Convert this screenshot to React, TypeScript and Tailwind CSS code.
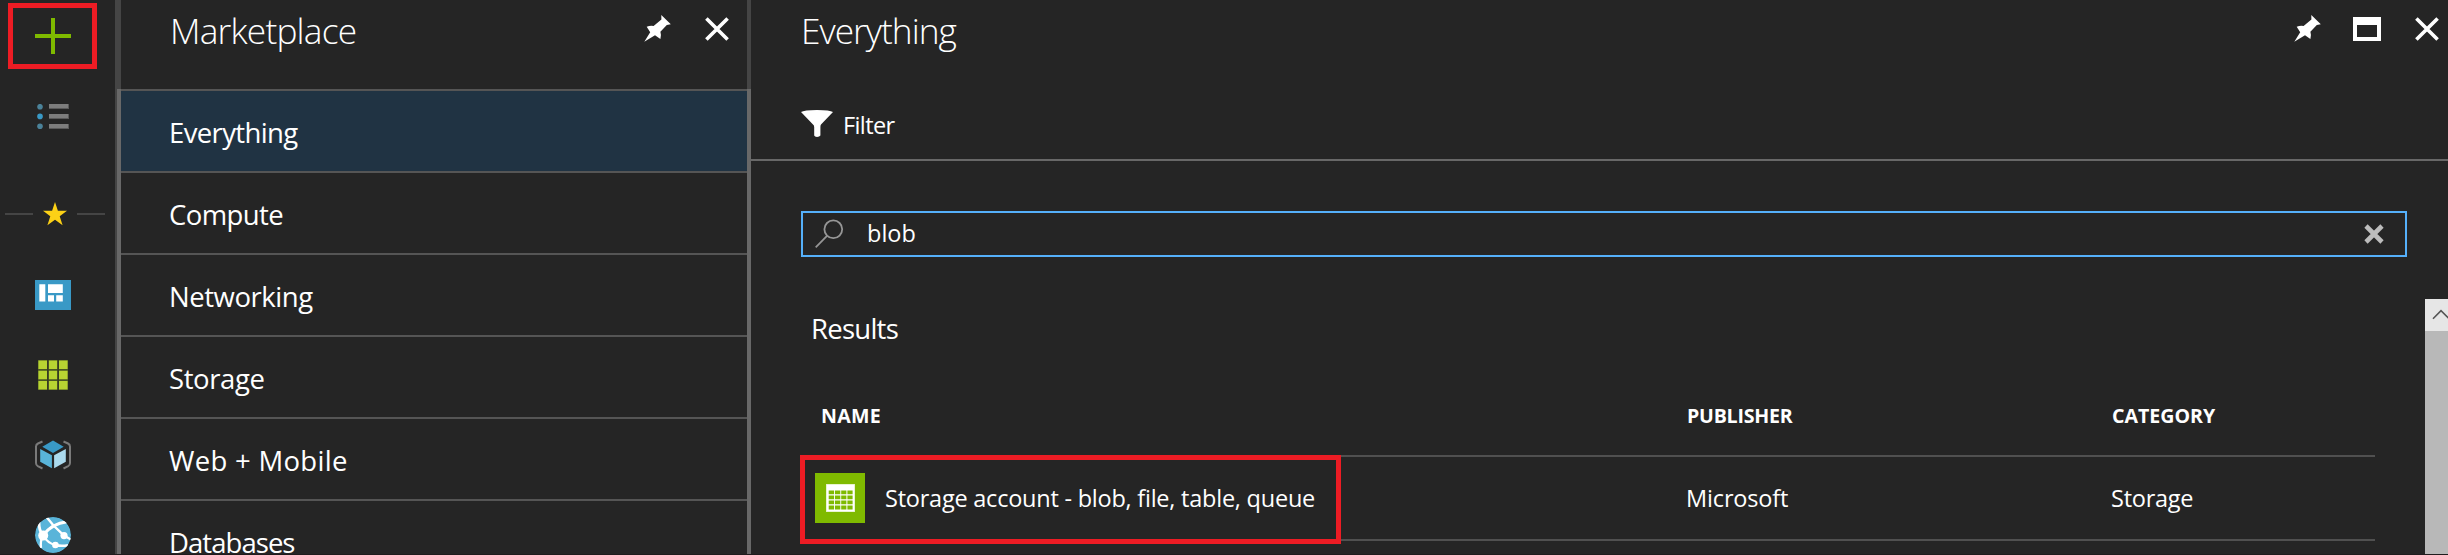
function PinIcon() {
  return (
    <svg width="28" height="28" viewBox="0 0 28 28" className="shrink-0" fill="#fff">
      <path d="M0.3 27.7 L6.2 18.2 L2.7 12.8 Q6 11.4 9.6 12 L17.4 5.4 L17.3 1 L26.8 10.3 L22.8 11 L16.4 17.8 Q17.6 21.4 16.4 25 L11 21.2 Z" />
    </svg>
  );
}

function CloseIcon() {
  return (
    <svg width="24" height="24" viewBox="0 0 24 24" className="shrink-0" stroke="#fff" strokeWidth="3.6">
      <path d="M1.4 1.4 L22.6 22.6 M22.6 1.4 L1.4 22.6" />
    </svg>
  );
}

function MaximizeIcon() {
  return (
    <svg width="28" height="24" viewBox="0 0 28 24" className="shrink-0">
      <path fill="#fff" fillRule="evenodd" d="M0 0H28V24H0ZM4 8V20H24V8Z" />
    </svg>
  );
}

function PlusIcon() {
  return (
    <svg width="36" height="36" viewBox="0 0 36 36" className="mt-[18px] ml-[35px] shrink-0" fill="#7fba00">
      <path d="M16 0H20V16H36V20H20V36H16V20H0V16H16Z" />
    </svg>
  );
}

function ListIcon() {
  return (
    <svg width="34" height="26" viewBox="0 0 34 26" className="mt-[50px] ml-[36px] shrink-0">
      <circle cx="4" cy="2.7" r="2.8" fill="#4b8299" />
      <circle cx="4" cy="12.4" r="2.8" fill="#3999c6" />
      <circle cx="4" cy="22.3" r="2.8" fill="#4b8299" />
      <path fill="#5a5a5a" d="M13 0h20v5h-20z M13 10h20v5h-20z M13 20h20v5h-20z" />
      <path fill="#7d7d7d" d="M13 0h19v4h-19z M13 10h19v4h-19z M13 20h19v4h-19z" />
    </svg>
  );
}

function StarIcon() {
  return (
    <svg width="24" height="24" viewBox="0 0 24 24" className="shrink-0" fill="#fcd116">
      <path d="M12 0 L14.9 8.8 L24 8.8 L16.7 14.2 L19.6 23.2 L12 17.8 L4.4 23.2 L7.3 14.2 L0 8.8 L9.1 8.8 Z" />
    </svg>
  );
}

function DashboardIcon() {
  return (
    <svg width="36" height="30" viewBox="0 0 36 30" className="mt-[54px] ml-[35px] shrink-0">
      <rect width="36" height="30" fill="#3999c6" />
      <path fill="#fff" d="M4.3 4.3h6v17.2h-6z M13 4.3h14.8v8.7h-14.8z M13 15.2h6v6.3h-6z M21.2 15.2h6.6v6.3h-6.6z" />
    </svg>
  );
}

function AllResourcesIcon() {
  return (
    <svg width="30" height="30" viewBox="0 0 30 30" className="mt-[50px] ml-[38px] shrink-0">
      <rect width="30" height="30" fill="#4a5622" />
      <path
        fill="#b8d432"
        d="M.4.4h8.6v8.6H.4z M10.8.4h8.4v8.6h-8.4z M21 .4h8.6v8.6H21z M.4 10.8h8.6v8.4H.4z M10.8 10.8h8.4v8.4h-8.4z M21 10.8h8.6v8.4H21z M.4 21h8.6v8.6H.4z M10.8 21h8.4v8.6h-8.4z M21 21h8.6v8.6H21z"
      />
      <path stroke="#252525" strokeWidth="0.9" d="M9.9 0V30M20.1 0V30" />
    </svg>
  );
}

function ResourceGroupIcon() {
  return (
    <svg width="36" height="30" viewBox="0 0 36 30" className="mt-[50px] ml-[35px] shrink-0">
      <path
        fill="none"
        stroke="#7a7a7a"
        strokeWidth="2"
        d="M7.5 1.5 L3 3.5 Q1 4.5 1 6.5 V23 Q1 25.2 2.8 26.2 L7.5 28.5 M28.5 1.5 L33 3.5 Q35 4.5 35 6.5 V23 Q35 25.2 33.2 26.2 L28.5 28.5"
      />
      <path fill="#3999c6" d="M18 .5 L28.7 6.8 L18 13 L7.3 6.8 Z" />
      <path fill="#59b4d9" d="M5.2 9 L16.9 15.3 V28.3 L5.2 21.8 Z" />
      <path fill="#abdaee" d="M30.8 9 L19.1 15.3 V28.3 L30.8 21.8 Z" />
    </svg>
  );
}

function AppServicesIcon() {
  return (
    <svg width="36" height="36" viewBox="0 0 36 36" className="mt-[47px] ml-[35px] shrink-0">
      <defs>
        <clipPath id="globe">
          <circle cx="18" cy="18" r="18" />
        </clipPath>
      </defs>
      <g clipPath="url(#globe)">
        <circle cx="18" cy="18" r="18" fill="#59b4d9" />
        <g fill="none" stroke="#fff" strokeWidth="2.4">
          <path d="M11.5 0 L18.5 8.5 L29 18.6 L36 22.5" />
          <path strokeWidth="3" d="M8.5 18 Q17 6.5 32 4.8" />
          <path d="M8.5 19 Q13 26.5 20.5 28 Q26 29.5 33 28.2" />
          <path strokeWidth="2.8" d="M8 19 Q3.8 13 4 5" />
          <path d="M8 19 Q5 24 6 31" />
        </g>
        <g fill="#fff">
          <circle cx="8.2" cy="18.6" r="5" />
          <circle cx="29" cy="18.6" r="3.6" />
          <circle cx="20.4" cy="28" r="3.3" />
        </g>
      </g>
    </svg>
  );
}

function FilterIcon() {
  return (
    <svg width="32" height="28" viewBox="0 0 32 28" className="mt-[109px] shrink-0" fill="#fff">
      <path d="M0 3 Q3 1 16 1 Q29 1 32 3 L20 15.6 Q19.4 16.4 19.4 18 V26.6 Q18.5 28 16 28 Q13.6 28 13.2 26.6 V18 Q13.2 16.4 12 15.6 Z" />
    </svg>
  );
}

function SearchIcon() {
  return (
    <svg width="30" height="30" viewBox="0 0 30 30" className="shrink-0" fill="none" stroke="#969696" strokeWidth="1.8">
      <circle cx="18.3" cy="10.3" r="8.9" />
      <path d="M12 16.8 L.7 28.4" />
    </svg>
  );
}

function TableTile() {
  return (
    <div className="flex size-[50px] shrink-0 bg-[#7fba00] pt-[11px] pl-[11px]">
      <svg width="29" height="28" viewBox="0 0 29 28">
        <rect width="29" height="28" fill="#dff0bd" />
        <path fill="#fff" d="M.7.7h27.6v26.6H.7z" />
        <path
          fill="#7fba00"
          d="M2.7 6.4h5.4v3.8h-5.4z M9 6.4h5.3v3.8H9z M15.2 6.4h5.2v3.8h-5.2z M21.4 6.4h5.2v3.8h-5.2z M2.7 11.4h5.4v3.9h-5.4z M9 11.4h5.3v3.9H9z M15.2 11.4h5.2v3.9h-5.2z M21.4 11.4h5.2v3.9h-5.2z M2.7 16.5h5.4v3.8h-5.4z M9 16.5h5.3v3.8H9z M15.2 16.5h5.2v3.8h-5.2z M21.4 16.5h5.2v3.8h-5.2z M2.7 21.5h5.4v4h-5.4z M9 21.5h5.3v4H9z M15.2 21.5h5.2v4h-5.2z M21.4 21.5h5.2v4h-5.2z"
        />
      </svg>
    </div>
  );
}

const categories = [
  { label: "Everything", style: "bg-[#203343] tracking-[-0.63px]" },
  { label: "Compute", style: "tracking-[-0.6px]" },
  { label: "Networking", style: "tracking-[-0.45px]" },
  { label: "Storage", style: "tracking-[-0.4px]" },
  { label: "Web + Mobile", style: "tracking-[0.3px]" },
  { label: "Databases", style: "tracking-[-0.95px]" },
];

function Sidebar() {
  return (
    <nav className="relative flex h-full w-[115px] shrink-0 flex-col">
      <PlusIcon />
      <ListIcon />
      <div className="mt-[72px] ml-[5px] flex h-6 w-[100px] shrink-0 items-center">
        <span className="h-0.5 w-7 bg-[#454545]" />
        <span className="mx-[10px] flex">
          <StarIcon />
        </span>
        <span className="h-0.5 w-7 bg-[#454545]" />
      </div>
      <DashboardIcon />
      <AllResourcesIcon />
      <ResourceGroupIcon />
      <AppServicesIcon />
      <div className="absolute top-[3px] left-2 h-[66px] w-[89px] border-[5px] border-[#ed1c24]" />
    </nav>
  );
}

function Marketplace() {
  return (
    <section className="flex h-full w-[626px] shrink-0 flex-col">
      <header className="flex h-[89px] shrink-0 items-start">
        <h1 className="ml-[49px] flex-1 text-[35.3px] leading-[60px] font-light tracking-[-0.8px]">Marketplace</h1>
        <div className="mt-[14px] mr-[18px] flex gap-[33px]">
          <PinIcon />
          <div className="mt-[3px]">
            <CloseIcon />
          </div>
        </div>
      </header>
      <ul className="border-t-2 border-[#555]">
        {categories.map((c) => (
          <li
            key={c.label}
            className={`h-[82px] border-b-2 border-[#555] pt-px pl-[48px] text-[27.5px] leading-[81px] ${c.style}`}
          >
            {c.label}
          </li>
        ))}
      </ul>
    </section>
  );
}

function Results() {
  return (
    <div className="relative ml-[50px] w-[1574px]">
      <h2 className="mt-[48px] ml-[10px] h-[46px] text-[27.5px] leading-[47px] tracking-[-0.75px]">Results</h2>
      <div className="mt-[44px] grid h-[62px] grid-cols-[866px_425px_1fr] border-b-2 border-[#505050] pl-5 text-[19.6px] leading-[41px] font-bold">
        <span className="tracking-[0.3px]">NAME</span>
        <span className="tracking-[-0.24px]">PUBLISHER</span>
        <span>CATEGORY</span>
      </div>
      <div className="grid h-[84px] grid-cols-[871px_425px_1fr] items-center border-b-2 border-[#505050] pl-[14px] text-[23.5px] leading-[40px]">
        <div className="flex items-center gap-5">
          <TableTile />
          <span className="tracking-[-0.23px]">Storage account - blob, file, table, queue</span>
        </div>
        <span className="tracking-[-0.15px]">Microsoft</span>
        <span className="tracking-[-0.25px]">Storage</span>
      </div>
      <div className="absolute top-[198px] left-[-1px] h-[89px] w-[541px] border-[5px] border-[#ed1c24]" />
    </div>
  );
}

function Everything() {
  return (
    <section className="flex h-full min-w-0 flex-1 flex-col">
      <div className="flex h-[161px] shrink-0 justify-between border-b-2 border-[#686868] pl-[50px]">
        <div>
          <h1 className="text-[35.3px] leading-[60px] font-light tracking-[-1px]">Everything</h1>
          <div className="-mt-[60px] flex gap-[10px]">
            <FilterIcon />
            <span className="mt-[105px] text-[23.5px] leading-[40px] tracking-[-0.6px]">Filter</span>
          </div>
        </div>
        <div className="mt-[14px] mr-[9px] flex items-start">
          <PinIcon />
          <div className="mt-[3px] ml-[31px] flex gap-[34px]">
            <MaximizeIcon />
            <CloseIcon />
          </div>
        </div>
      </div>
      <div className="mt-[50px] ml-[50px] flex h-[46px] w-[1606px] shrink-0 items-center border-2 border-[#55b0fa]">
        <div className="ml-3 flex">
          <SearchIcon />
        </div>
        <span className="-mt-0.5 ml-[22px] flex-1 text-[23.5px] leading-[40px]">blob</span>
        <svg width="20" height="20" viewBox="0 0 20 20" className="mr-[21px]" stroke="#bdbdbd" strokeWidth="4.6">
          <path d="M2 2 L18 18 M18 2 L2 18" />
        </svg>
      </div>
      <div className="flex min-h-0 flex-1 justify-between">
        <Results />
        <div className="mt-[42px] flex w-[23px] flex-col overflow-hidden bg-[#b8b8b8]">
          <div className="h-8 shrink-0 bg-[#e6e6e6]">
            <svg width="23" height="32" viewBox="0 0 23 32" fill="none" stroke="#555" strokeWidth="1.6">
              <path d="M8 19.7 L16 11.7 L24 19.7" />
            </svg>
          </div>
        </div>
      </div>
    </section>
  );
}

export default function App() {
  return (
    <main className="flex h-[555px] w-[2448px] flex-col overflow-hidden bg-[#252525] font-['Open_Sans',sans-serif] text-white">
      <div className="flex h-[554px] shrink-0 overflow-hidden">
        <Sidebar />
        <div className="flex w-1.5 shrink-0 flex-col bg-[#454545] pt-[89px]">
          <div className="ml-0.5 flex-1 bg-[#686868]" />
        </div>
        <Marketplace />
        <div className="flex w-1 shrink-0 flex-col bg-[#454545] pt-[89px]">
          <div className="flex-1 bg-[#686868]" />
        </div>
        <Everything />
      </div>
      <div className="h-px bg-[#1f1c1d]" />
    </main>
  );
}
